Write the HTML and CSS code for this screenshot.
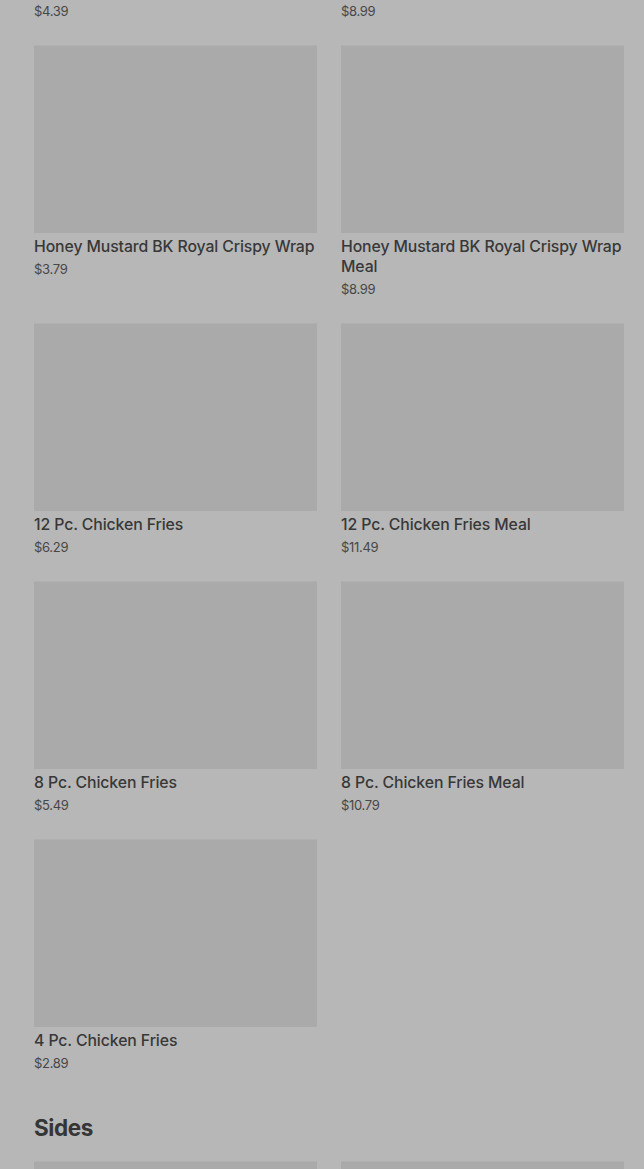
FILE: index.html
```html
<!DOCTYPE html>
<html>
<head>
<meta charset="utf-8">
<link rel="stylesheet" href="styles.css">
</head>
<body>
<main class="menu">
  <section class="section">
    <div class="grid">
      <div class="card"><div class="img"></div><div class="name">Spicy BK Royal Crispy Wrap</div><div class="price">$4.39</div></div>
      <div class="card"><div class="img"></div><div class="name">Spicy BK Royal Crispy Meal</div><div class="price">$8.99</div></div>
      <div class="card"><div class="img"></div><div class="name">Honey Mustard BK Royal Crispy Wrap</div><div class="price">$3.79</div></div>
      <div class="card"><div class="img"></div><div class="name">Honey Mustard BK Royal Crispy Wrap Meal</div><div class="price">$8.99</div></div>
      <div class="card"><div class="img"></div><div class="name">12 Pc. Chicken Fries</div><div class="price">$6.29</div></div>
      <div class="card"><div class="img"></div><div class="name">12 Pc. Chicken Fries Meal</div><div class="price">$11.49</div></div>
      <div class="card"><div class="img"></div><div class="name">8 Pc. Chicken Fries</div><div class="price">$5.49</div></div>
      <div class="card"><div class="img"></div><div class="name">8 Pc. Chicken Fries Meal</div><div class="price">$10.79</div></div>
      <div class="card"><div class="img"></div><div class="name">4 Pc. Chicken Fries</div><div class="price">$2.89</div></div>
    </div>
  </section>
  <section class="section">
    <h2 class="heading">Sides</h2>
    <div class="grid">
      <div class="card"><div class="img"></div></div>
      <div class="card"><div class="img"></div></div>
    </div>
  </section>
</main>
</body>
</html>
```
FILE: styles.css
```css
html, body {
  margin: 0;
  padding: 0;
  background: #b7b7b7;
  overflow: hidden;
  height: 1169px;
}
.menu {
  padding: 0 20px 0 34px;
  margin-top: -213px;
  font-family: Inter, "Noto Sans", sans-serif;
  color: #3a3a3a;
}
.section + .section {
  margin-top: 41px;
}
.grid {
  display: grid;
  grid-template-columns: 283px 283px;
  column-gap: 24px;
  row-gap: 25px;
}
.card {
  display: flex;
  flex-direction: column;
}
.img {
  height: 188px;
  background: #aaaaaa;
  box-shadow: inset 0 1px 0 #b0b0b0;
  margin-bottom: 4px;
}
.name {
  font-size: 15.8px;
  line-height: 20px;
  font-weight: 500;
  color: #383838;
  letter-spacing: -0.1px;
}
.price {
  margin-top: 3px;
  font-size: 13px;
  line-height: 18px;
  color: #474747;
  letter-spacing: -0.3px;
}
.heading {
  margin: 0 0 18px;
  font-size: 22.5px;
  line-height: 30px;
  font-weight: 700;
  color: #353535;
  letter-spacing: -0.4px;
}
```
